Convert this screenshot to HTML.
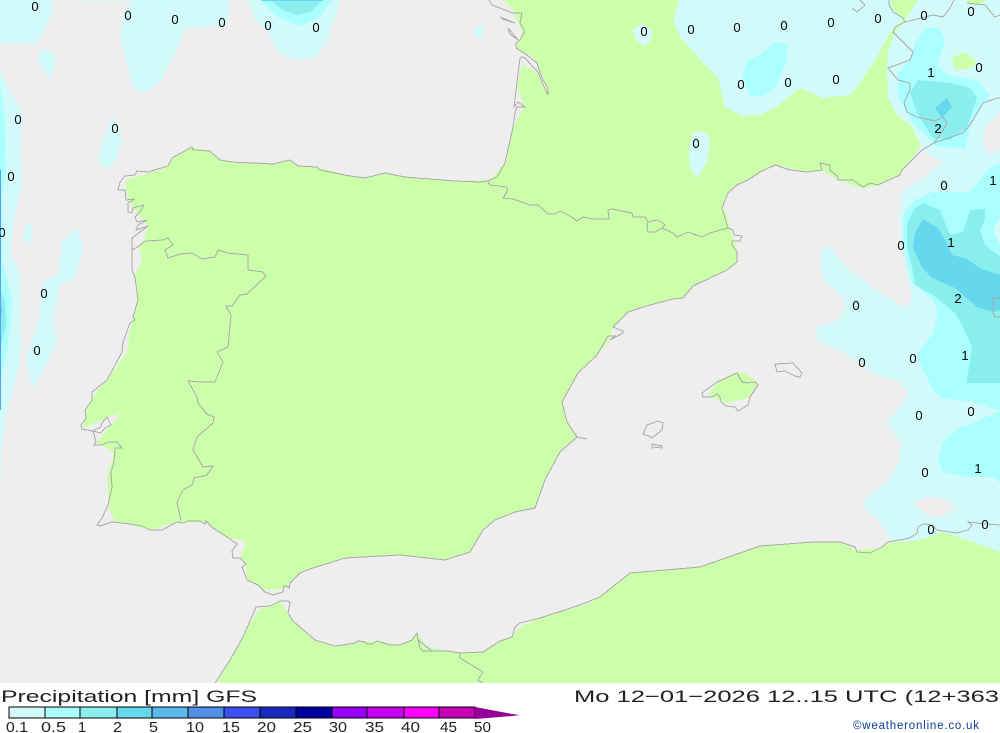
<!DOCTYPE html>
<html><head><meta charset="utf-8"><style>
html,body{margin:0;padding:0;background:#fff;width:1000px;height:733px;overflow:hidden}
svg{display:block}
.c{fill:none;stroke:#aaa;stroke-width:1;shape-rendering:crispEdges}
.f polygon{shape-rendering:crispEdges}
.l text{font:13px "Liberation Sans",sans-serif;fill:#000;text-anchor:middle}
.t{font-family:"Liberation Sans",sans-serif;fill:#222}
.k text{font:14.5px "Liberation Sans",sans-serif;fill:#222}
</style></head><body>
<svg width="1000" height="733" viewBox="0 0 1000 733" xmlns="http://www.w3.org/2000/svg">
<rect width="1000" height="683" fill="#eee"/>
<g class="f">
<polygon fill="#ccffaa" points="503,0 1000,0 1000,100 920,147 910,162 900,175 878,185 863,189 838,180 822,170 807,172 775,165 760,172 748,180 737,185 728,193 722,208 727,213 730,228 737,250 737,262 727,270 710,278 693,286 683,298 673,299 650,305 628,312 613,327 610,340 597,355 578,373 562,402 567,422 577,437 560,452 545,480 535,508 515,512 495,520 483,530 470,552 445,560 400,555 345,558 310,569 300,573 290,583 283,589 265,590 247,580 246,564 240,558 247,542 227,537 207,523 177,522 150,530 114,521 109,507 107,477 114,452 97,443 110,426 122,412 83,428 87,407 98,390 107,380 127,352 130,330 138,300 134,277 142,260 139,247 143,242 148,227 128,200 125,180 135,177 160,170 168,166 172,158 192,147 210,151 220,160 232,162 273,164 290,160 298,166 317,167 350,176 365,178 385,173 405,177 430,179 455,181 490,180 505,163 513,127 524,107 517,87 522,65 537,72 548,93 543,77 533,57 516,48 522,33 513,10"/>
<polygon fill="#ccffaa" points="217,683 230,660 243,637 258,610 270,606 280,601 288,613 293,621 315,640 335,646 355,643 365,642 377,641 400,645 412,640 417,633 427,647 448,651 460,653 483,652 500,641 512,637 520,627 540,618 590,603 630,573 700,567 760,546 800,543 840,542 855,550 880,548 890,543 920,540 943,532 967,540 1000,552 1000,683"/>
<polygon fill="#ccffaa" points="708,395 720,380 735,373 743,372 758,383 748,398 727,403 713,398"/>
<!-- light -->
<g fill="#d2fafa">
<polygon points="0,0 53,0 52,13 43,33 35,45 20,43 0,43"/>
<polygon points="40,49 53,52 56,63 49,79 38,63"/>
<polygon points="80,0 130,0 130,1 80,1"/>
<polygon points="132,0 230,0 227,25 200,27 185,28 177,50 160,82 143,93 132,87 127,63 120,40 123,17"/>
<polygon points="248,0 340,0 328,40 315,58 293,59 277,52 268,32 253,17"/>
<polygon points="115,117 122,137 118,155 110,169 98,163 100,150 108,127"/>
<polygon points="0,70 13,97 23,113 20,147 23,177 13,227 10,253 20,273 20,330 22,347 17,373 7,410 2,440 0,500"/>
<polygon points="30,222 33,235 26,247 23,235 26,225"/>
<polygon points="78,227 83,250 75,278 60,285 53,320 57,342 43,370 32,389 26,360 39,317 42,283 58,275 63,240"/>
<polygon points="480,24 485,30 480,40 474,32"/>
<polygon points="632,30 643,23 653,32 650,42 644,46 636,40"/>
<polygon points="695,131 707,133 710,143 707,163 697,178 690,167 689,150 693,133"/>
<polygon points="679,0 892,0 890,5 903,20 890,33 877,57 860,83 850,95 823,98 800,88 775,108 760,115 743,116 725,107 718,78 707,67 680,37 673,20"/>
<polygon points="918,0 1000,0 1000,112 992,120 985,128 983,143 988,153 1000,150 1000,552 967,540 943,532 920,540 892,542 878,520 863,507 868,495 887,483 898,463 902,443 890,428 888,420 903,403 908,393 900,382 870,372 860,363 843,352 817,340 817,327 838,320 845,307 843,297 823,280 820,250 828,245 847,268 872,287 897,303 907,307 912,297 907,277 902,247 900,213 903,190 920,180 943,163 923,150 912,127 897,115 888,97 887,70 888,50 895,32 903,23"/>
</g>
<polygon fill="#ccffaa" points="952,58 963,52 976,60 973,68 955,70"/>
<polygon fill="#ccffaa" points="966,0 985,0 980,4 970,4"/>
<polygon fill="#eee" points="912,502 928,497 943,498 955,507 970,507 955,508 943,517 928,517"/>
<!-- 0.5 -->
<g fill="#aaffff">
<polygon points="260,0 332,0 320,17 300,26 277,17"/>
<polygon points="0,83 5,120 6,170 2,200 2,260 12,300 10,330 3,370 0,390"/>
<polygon points="760,55 775,42 788,44 786,62 775,88 762,97 750,96 742,75 748,60"/>
<polygon points="915,43 925,28 940,28 945,40 938,65 947,75 977,80 990,95 973,117 965,148 937,147 913,123 898,97 898,73 912,57"/>
<polygon points="1000,163 987,170 970,192 933,192 915,200 903,215 903,247 912,283 933,300 938,313 933,333 917,355 923,370 933,390 942,398 973,402 997,410 1000,410"/>
<polygon points="1000,411 980,420 957,429 943,442 938,460 943,472 967,477 993,477 1000,483"/>
</g>
<polygon fill="#d2fafa" points="1000,217 993,230 1000,245"/>
<!-- 1 -->
<g fill="#8aeeee">
<polygon points="270,0 323,0 310,12 297,15 283,10"/>
<polygon points="0,290 5,300 6,325 0,350"/>
<polygon points="910,93 918,80 950,83 970,88 977,98 967,128 950,140 933,138 917,113"/>
<polygon points="923,203 915,208 907,223 907,247 912,267 915,285 933,295 955,313 963,327 972,347 967,380 967,383 1000,383 1000,257 985,245 980,230 985,220 985,209 970,210 963,232 950,235 940,210"/>
</g>
<!-- 2 -->
<g fill="#66d8ee">
<polygon points="262,0 323,0 323,1 262,1"/>
<polygon points="935,108 947,98 952,107 942,118"/>
<polygon points="923,219 915,233 913,247 922,268 932,278 955,288 977,307 993,312 1000,310 1000,275 980,268 965,258 952,255 947,243 938,228"/>
<polygon points="0,300 2,310 0,325"/>
</g>
<rect x="0" y="170" width="1" height="240" fill="#5aa0ee"/>
</g>
<!-- coasts -->
<g class="c">
<polyline points="489,0 492,5 513,13 522,13 520,23 524,30 524,33 520,40 516,43 516,48 527,55 537,63 542,78 548,88 548,95 542,82 538,72 533,67 525,58 522,57 520,58 514,107 518,102 525,107 517,107 515,113 513,127 505,163 497,177 488,181 480,182 455,181 430,179 405,177 385,173 365,178 350,176 320,170 317,167 298,166 290,160 273,164 232,162 220,160 210,151 193,150 192,147 172,158 168,166 148,172 137,171 135,175 125,176 120,182 118,190 125,190 126,200 135,199 128,203 128,212 132,213 133,208 144,205 140,212 135,217 137,222 147,220 138,225 136,230 148,226 140,232 132,238 132,270 135,277 138,300 133,317 135,320 130,323 123,342 122,352 107,380 92,392 92,400 85,410 86,418 81,425 82,429 92,431 101,427 102,423 107,417 111,425 105,428 101,433 93,431 96,442 94,445 102,445 108,442 117,442 122,448 115,448 114,462 111,472 112,487 108,505 102,518 97,525 100,526 112,522 130,524 142,526 150,530 162,530 177,522 183,523 188,521 200,521 205,524 206,521 213,528 227,537 237,544 232,551 233,558 240,558 246,564 242,567 247,580 258,585 265,592 273,595 283,592 284,586 289,587 289,589 290,583 300,573 310,569 345,558 400,555 445,560 470,552 483,530 495,520 515,512 535,508 545,480 560,452 577,437 587,439"/>
<polyline points="577,437 567,422 562,402 578,373 597,355 608,336 615,336 610,340 623,333 623,331 613,327 628,312 650,305 673,299 683,298 693,286 710,278 727,270 737,262 737,252 732,245 732,241 740,241 742,236 734,235 733,230 728,228 722,208 728,193 737,185 748,180 760,172 775,165 790,170 807,172 822,170 820,163 830,165 830,170 838,177 838,180 853,180 863,187 870,183 878,185 900,175 902,170 910,162 922,150 934,143 963,133 970,125 983,103 997,98 1000,98"/>
<polyline points="488,182 490,185 507,187 507,192 503,198 513,199 530,205 538,205 548,214 555,214 560,211 570,216 577,221 583,217 592,219 609,219 608,210 612,209 632,213 633,217 645,217 648,222 647,227 648,232 655,232 662,228 673,233 677,237 688,232 702,237 710,233 728,228"/>
<polyline points="648,222 657,220 663,223 665,225 662,228"/>
<polyline points="132,250 139,246 145,241 163,240 168,238 173,245 165,250 168,258 180,254 192,253 202,259 215,257 218,250 227,253 248,255 248,270 263,272 266,276 247,294 240,295 232,306 226,306 231,315 228,347 217,352 223,362 215,382 200,382 188,381 197,397 198,403 207,414 214,417 213,423 197,437 193,450 203,467 213,466 207,475 194,478 192,485 183,490 177,502 181,521"/>
<polyline points="215,683 230,660 243,637 256,607 270,606 280,601 288,601 290,603 288,613 293,621 315,640 335,646 343,645 355,643 358,641 365,642 367,644 372,644 377,641 390,645 400,645 412,640 417,633 418,640 427,647 432,651 448,651 460,653 483,652 500,641 512,637 515,627 520,623 540,618 580,605 600,597 630,573 700,567 760,546 800,543 813,542 840,542 855,547 857,552 870,553 882,547 888,542 910,538 917,533 918,527 923,524 932,525 937,530 957,533 968,530 972,525 968,522 985,524 1000,525"/>
<polyline points="418,640 420,648 423,651 432,651"/>
<polyline points="460,653 460,658 483,672 478,680 483,683"/>
<polyline points="889,0 889,5 893,12 903,18 905,22 895,27 893,32 903,42 913,52 910,60 888,68 898,80 910,83 910,90 904,103 907,112 917,117 935,121 943,117 947,123 942,132 934,143"/>
<polyline points="905,22 933,15 943,17 950,8 954,0"/>
<polyline points="967,3 985,5 995,17 1000,15"/>
<polyline points="860,0 865,5 857,12 852,8"/>
<polyline points="500,17 515,23 502,19"/>
<polyline points="508,28 518,40 510,34 508,28"/>
<polyline points="1000,298 993,298 993,312 995,317 1000,317"/>
<polygon points="702,393 717,382 737,373 742,382 747,383 755,382 758,385 750,397 748,405 738,411 735,407 726,406 721,402 720,397 717,394 712,397 703,397"/>
<polygon points="775,364 793,363 802,373 800,377 795,376 785,371 777,372"/>
<polygon points="643,434 647,425 658,421 663,423 662,430 652,438 649,436"/>
<polyline points="652,449 652,444 662,446 662,448 653,447"/>
</g>
<!-- labels -->
<g class="l">
<text x="35" y="11">0</text><text x="128" y="20">0</text><text x="175" y="24">0</text><text x="222" y="27">0</text><text x="268" y="30">0</text><text x="316" y="32">0</text><text x="18" y="124">0</text><text x="115" y="133">0</text><text x="11" y="181">0</text><text x="2" y="237">0</text><text x="44" y="298">0</text><text x="37" y="355">0</text><text x="644" y="36">0</text><text x="691" y="34">0</text><text x="737" y="32">0</text><text x="784" y="30">0</text><text x="831" y="27">0</text><text x="878" y="23">0</text><text x="924" y="20">0</text><text x="971" y="16">0</text><text x="741" y="89">0</text><text x="788" y="87">0</text><text x="836" y="84">0</text><text x="979" y="72">0</text><text x="696" y="148">0</text><text x="944" y="190">0</text><text x="901" y="250">0</text><text x="856" y="310">0</text><text x="862" y="367">0</text><text x="913" y="363">0</text><text x="919" y="420">0</text><text x="971" y="416">0</text><text x="925" y="477">0</text><text x="931" y="534">0</text><text x="985" y="529">0</text>
<text x="931" y="77">1</text><text x="993" y="185">1</text><text x="951" y="247">1</text><text x="965" y="360">1</text><text x="978" y="473">1</text><text x="938" y="133">2</text><text x="958" y="303">2</text>
</g>
<rect y="683" width="1000" height="50" fill="#fff"/>
<text class="t" x="1" y="702" font-size="17" textLength="256" lengthAdjust="spacingAndGlyphs">Precipitation [mm] GFS</text>
<text class="t" x="574" y="702" font-size="17" textLength="425" lengthAdjust="spacingAndGlyphs">Mo 12−01−2026 12..15 UTC (12+363</text>
<text x="853" y="729" font-family="Liberation Sans,sans-serif" font-size="11.5" fill="#0a3c96" textLength="126" lengthAdjust="spacing">©weatheronline.co.uk</text>
<!-- legend -->
<g stroke="#000" stroke-width="1" shape-rendering="crispEdges">
<rect x="9" y="707" width="36" height="11" fill="#d2fafa"/>
<rect x="45" y="707" width="35" height="11" fill="#aaffff"/>
<rect x="80" y="707" width="37" height="11" fill="#8aeeee"/>
<rect x="117" y="707" width="35" height="11" fill="#66d8ee"/>
<rect x="152" y="707" width="36" height="11" fill="#5ab8ea"/>
<rect x="188" y="707" width="36" height="11" fill="#5090e8"/>
<rect x="224" y="707" width="36" height="11" fill="#3c50f0"/>
<rect x="260" y="707" width="36" height="11" fill="#1a28c0"/>
<rect x="296" y="707" width="36" height="11" fill="#0000a0"/>
<rect x="332" y="707" width="35" height="11" fill="#9600fa"/>
<rect x="367" y="707" width="37" height="11" fill="#c800f0"/>
<rect x="404" y="707" width="35" height="11" fill="#ff00ff"/>
<rect x="439" y="707" width="36" height="11" fill="#c800b4"/>
</g>
<polygon points="475,707 512,714 520,715 512,716 475,719" fill="#96009a"/>
<g class="k">
<text x="6" y="732" textLength="22" lengthAdjust="spacingAndGlyphs">0.1</text><text x="41" y="732" textLength="25" lengthAdjust="spacingAndGlyphs">0.5</text><text x="78" y="732">1</text><text x="113" y="732" textLength="9" lengthAdjust="spacingAndGlyphs">2</text><text x="149" y="732" textLength="9" lengthAdjust="spacingAndGlyphs">5</text><text x="186" y="732" textLength="18" lengthAdjust="spacingAndGlyphs">10</text><text x="222" y="732" textLength="18" lengthAdjust="spacingAndGlyphs">15</text><text x="257" y="732" textLength="19" lengthAdjust="spacingAndGlyphs">20</text><text x="293" y="732" textLength="19" lengthAdjust="spacingAndGlyphs">25</text><text x="329" y="732" textLength="18" lengthAdjust="spacingAndGlyphs">30</text><text x="365" y="732" textLength="19" lengthAdjust="spacingAndGlyphs">35</text><text x="401" y="732" textLength="19" lengthAdjust="spacingAndGlyphs">40</text><text x="440" y="732" textLength="17" lengthAdjust="spacingAndGlyphs">45</text><text x="474" y="732" textLength="17" lengthAdjust="spacingAndGlyphs">50</text>
</g>
</svg>
</body></html>
